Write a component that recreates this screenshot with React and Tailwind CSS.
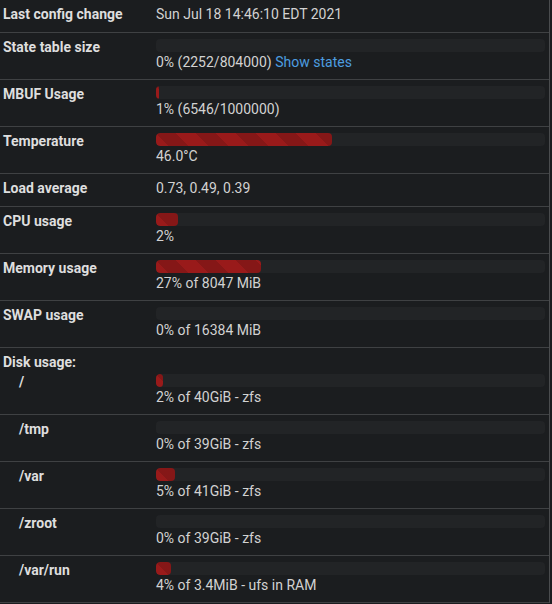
import React from "react";

const font = { fontFamily: "Roboto, 'Liberation Sans', sans-serif" };

function Bar({ w }) {
  return (
    <div className="h-[13px] w-full rounded-[4px] bg-[#222426] mb-[2px] overflow-hidden">
      {w > 0 && (
        <div
          className="h-full rounded-[4px] bg-[#991a1a] bg-[linear-gradient(45deg,rgba(0,0,0,0.13)_25%,transparent_25%,transparent_50%,rgba(0,0,0,0.13)_50%,rgba(0,0,0,0.13)_75%,transparent_75%,transparent)] bg-[length:40px_40px]"
          style={{ width: w }}
        />
      )}
    </div>
  );
}

function Row({ label, children, indent, border = true, h = "h-[47px]" }) {
  return (
    <div className={`flex ${h} ${border ? "border-b border-[#3f4143]" : ""}`}>
      <div
        className={`w-[156px] shrink-0 pt-[6px] font-bold text-[14px] leading-[17px] text-[#dedede] ${indent ? "pl-[19px]" : "pl-[3px]"}`}
      >
        {label}
      </div>
      <div className="flex-1 pt-[6px] pr-[4px] text-[14px] leading-[17px] text-[#d2d2d2]">
        {children}
      </div>
    </div>
  );
}

function BarRow({ label, w, text, indent }) {
  return (
    <Row label={label} indent={indent}>
      <Bar w={w} />
      <div>{text}</div>
    </Row>
  );
}

export default function App() {
  return (
    <div className="w-[552px] h-[604px] bg-[#1b1d1f] overflow-hidden" style={font}>
      <div className="w-[550px] border-r border-[#4a4c4e]">
        <Row label="Last config change" h="h-[33px]">
          Sun Jul 18 14:46:10 EDT 2021
        </Row>
        <Row label="State table size">
          <Bar w={0} />
          <div>
            0% (2252/804000){" "}
            <span className="text-[#4d9ee0]">Show states</span>
          </div>
        </Row>
        <BarRow label="MBUF Usage" w={3} text="1% (6546/1000000)" />
        <BarRow label="Temperature" w={176} text="46.0°C" />
        <Row label="Load average" h="h-[33px]">
          0.73, 0.49, 0.39
        </Row>
        <BarRow label="CPU usage" w={22} text="2%" />
        <BarRow label="Memory usage" w={105} text="27% of 8047 MiB" />
        <BarRow label="SWAP usage" w={0} text="0% of 16384 MiB" />
        <Row label="Disk usage:" border={false} h="h-[20px]" />
        <BarRow label="/" indent w={7} text="2% of 40GiB - zfs" />
        <BarRow label="/tmp" indent w={0} text="0% of 39GiB - zfs" />
        <BarRow label="/var" indent w={19} text="5% of 41GiB - zfs" />
        <BarRow label="/zroot" indent w={0} text="0% of 39GiB - zfs" />
        <BarRow label="/var/run" indent w={15} text="4% of 3.4MiB - ufs in RAM" />
      </div>
    </div>
  );
}
